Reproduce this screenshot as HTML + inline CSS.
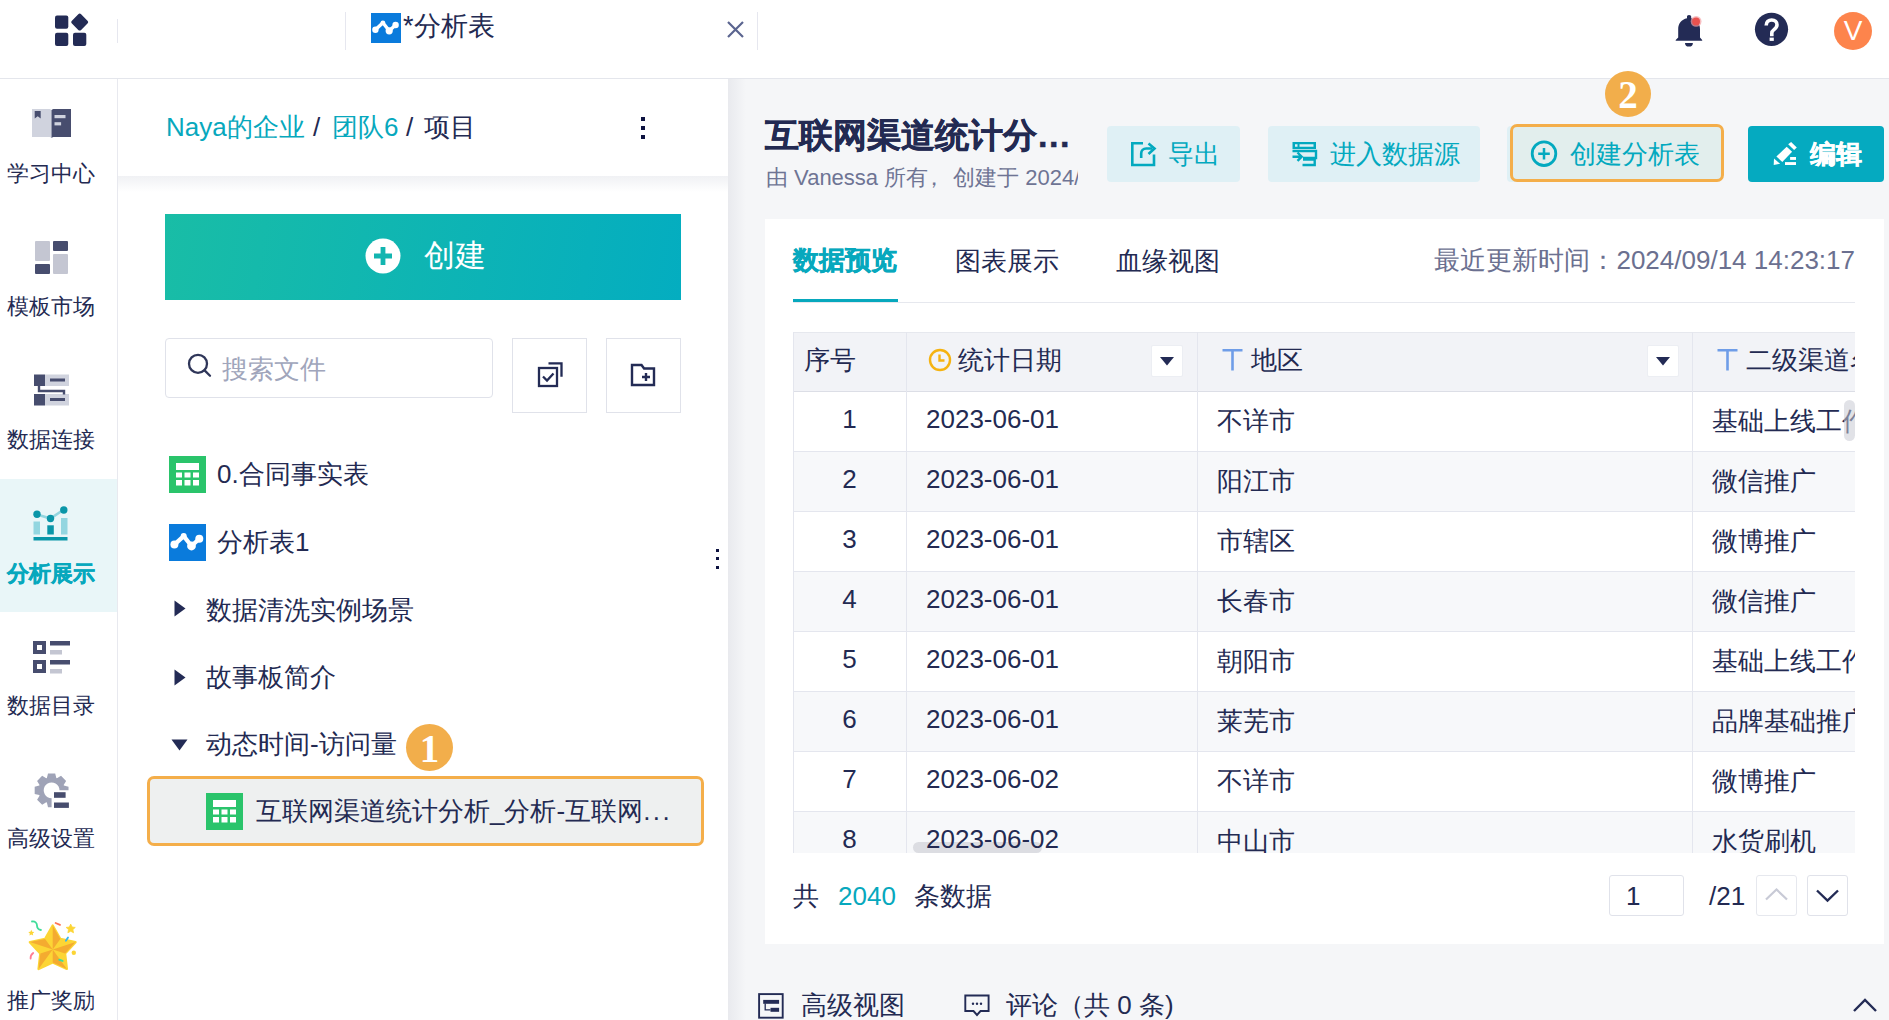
<!DOCTYPE html>
<html><head><meta charset="utf-8">
<style>
*{box-sizing:border-box;margin:0;padding:0}
html,body{width:1889px;height:1020px;overflow:hidden;background:#fff;font-family:"Liberation Sans",sans-serif;color:#232a52}
.a{position:absolute}
.t{position:absolute;white-space:nowrap;line-height:1}
.side{color:#232a52;font-size:22.4px}
.tree{font-size:26px;color:#232a52}
.row{position:absolute;left:793px;width:1062px;height:60px;border-bottom:1px solid #e4e6ee}
.cell{position:absolute;top:0;height:60px;border-right:1px solid #e4e6ee}
.num{font-size:26px;color:#232a52}
</style></head><body>
<!-- ============ top bar ============ -->
<div class="a" style="left:0;top:0;width:1889px;height:79px;background:#fff;border-bottom:1px solid #e4e6ec"></div>
<svg class="a" style="left:54px;top:13px" width="36" height="34" viewBox="0 0 36 34">
<rect x="1" y="2.4" width="13.3" height="13.3" rx="2" fill="#232b55"/>
<rect x="1" y="19.7" width="13.3" height="13.3" rx="2" fill="#232b55"/>
<rect x="19" y="19.7" width="13.3" height="13.3" rx="2" fill="#232b55"/>
<rect x="19.2" y="2.6" width="13" height="13" rx="2" fill="#232b55" transform="rotate(45 25.7 9.1)"/>
</svg>
<div class="a" style="left:117px;top:19px;width:1px;height:24px;background:#e6e7ef"></div>
<div class="a" style="left:345px;top:12px;width:1px;height:38px;background:#e6e7ef"></div>
<div class="a" style="left:757px;top:12px;width:1px;height:38px;background:#e6e7ef"></div>
<svg class="a" style="left:371px;top:13px" width="30" height="30" viewBox="0 0 30 30">
<rect width="30" height="30" fill="#0a7bdc"/>
<polyline points="4.4,16.7 11.9,9.8 18.2,17.8 24.6,12" fill="none" stroke="#fff" stroke-width="3.4" stroke-linecap="round" stroke-linejoin="round"/><circle cx="4.4" cy="16.7" r="3.2" fill="#fff"/><circle cx="18.2" cy="17.8" r="3.6" fill="#fff"/><circle cx="24.6" cy="12" r="3.2" fill="#fff"/><circle cx="11.9" cy="9.8" r="2.4" fill="#fff"/>
</svg>
<div class="t" style="left:403px;top:13px;font-size:27px">*分析表</div>
<svg class="a" style="left:726px;top:20px" width="19" height="19" viewBox="0 0 19 19"><path d="M2 2L17 17M17 2L2 17" stroke="#5b6590" stroke-width="2.2"/></svg>
<svg class="a" style="left:1673px;top:13px" width="34" height="36" viewBox="0 0 34 36">
<path d="M16 2c-1.3 0-2 .8-2 1.8v1.4C8.5 6.5 5.2 10.5 5.2 16v8.5L2.7 27v.7h26.5V27L27 24.5V16c0-5.5-3.3-9.5-8.8-10.8V3.8c0-1-.7-1.8-2.2-1.8z" fill="#232b55"/>
<path d="M12 29.9h7.9a3.95 3.6 0 0 1-7.9 0z" fill="#232b55"/>
<circle cx="23.1" cy="8.4" r="5.4" fill="#f3a3a6" opacity=".7"/>
<circle cx="23.1" cy="8.4" r="3.9" fill="#e9524f"/>
</svg>
<svg class="a" style="left:1754px;top:12px" width="35" height="35" viewBox="0 0 35 35">
<circle cx="17.5" cy="17.3" r="16.6" fill="#232b55"/>
<path d="M12.2 13.5c0-3.6 2.4-5.5 5.5-5.5 3.3 0 5.3 2 5.3 4.8 0 2.6-1.5 3.7-3 4.8-1.4 1-2.2 1.8-2.2 3.6v3" fill="none" stroke="#fff" stroke-width="3.6"/>
<rect x="15.6" y="25.6" width="4.2" height="3.3" fill="#fff"/>
</svg>
<div class="a" style="left:1834px;top:12px;width:38px;height:38px;border-radius:50%;background:#fd844c"></div>
<div class="t" style="left:1834px;top:17px;width:38px;text-align:center;font-size:28px;color:#fff">V</div>

<!-- ============ sidebar ============ -->
<div class="a" style="left:117px;top:79px;width:1px;height:941px;background:#e8e9ef"></div>
<div class="a" style="left:0;top:479px;width:117px;height:133px;background:#e9f6f8"></div>
<!-- 学习中心 -->
<svg class="a" style="left:32px;top:109px" width="39" height="29" viewBox="0 0 39 29">
<path d="M0 0h16.5c1.5 0 2.5 .5 3 1v28c-.5-.5-1.5-1-3-1H0z" fill="#d0d3de"/>
<path d="M39 0H22.5c-1.5 0-2.5.5-3 1v28c.5-.5 1.5-1 3-1H39z" fill="#474d6e"/>
<path d="M2.7 2h6v7.5l-3-2.2-3 2.2z" fill="#474d6e"/>
<rect x="22.5" y="6" width="11" height="3.2" fill="#d0d3de"/>
<rect x="22.5" y="13.2" width="6.6" height="3.2" fill="#d0d3de"/>
</svg>
<div class="t side" style="left:7px;top:163px">学习中心</div>
<!-- 模板市场 -->
<svg class="a" style="left:35px;top:241px" width="34" height="34" viewBox="0 0 34 34">
<rect x="0" y="0" width="15" height="20" rx="1" fill="#c4c6d2"/>
<rect x="18" y="0" width="15" height="10" rx="1" fill="#474d6e"/>
<rect x="0" y="23" width="15" height="10" rx="1" fill="#474d6e"/>
<rect x="18" y="13" width="15" height="20" rx="1" fill="#c4c6d2"/>
</svg>
<div class="t side" style="left:7px;top:296px">模板市场</div>
<!-- 数据连接 -->
<svg class="a" style="left:34px;top:374px" width="35" height="33" viewBox="0 0 35 33">
<rect x="11" y="0.5" width="24" height="11.5" fill="#d0d3de"/>
<rect x="11" y="20" width="24" height="11.5" fill="#d0d3de"/>
<rect x="0" y="0.5" width="11" height="11.5" fill="#474d6e"/>
<rect x="0" y="20" width="11" height="11.5" fill="#474d6e"/>
<rect x="16" y="4.5" width="15" height="3" fill="#474d6e"/>
<rect x="16" y="24" width="15" height="3" fill="#474d6e"/>
<path d="M5 12v5h25v3.5" fill="none" stroke="#474d6e" stroke-width="2.4"/>
</svg>
<div class="t side" style="left:7px;top:429px">数据连接</div>
<!-- 分析展示 active -->
<svg class="a" style="left:33px;top:506px" width="36" height="35" viewBox="0 0 36 35">
<rect x="0.5" y="15.5" width="6.5" height="13" fill="#93d6e0"/>
<rect x="14.3" y="19.3" width="6.5" height="9.2" fill="#0a96a8"/>
<rect x="28" y="12" width="6.5" height="16.5" fill="#93d6e0"/>
<polyline points="4,8.5 17.5,12.5 30.8,3.5" fill="none" stroke="#93d6e0" stroke-width="2.6"/>
<circle cx="4" cy="8.3" r="3.7" fill="#0a96a8"/>
<circle cx="17.5" cy="12.5" r="3.7" fill="#0a96a8"/>
<circle cx="30.8" cy="4" r="3.7" fill="#0a96a8"/>
<rect x="0.5" y="31" width="34" height="3.5" fill="#0a96a8"/>
</svg>
<div class="t side" style="left:7px;top:563px;color:#07a8bd;font-weight:bold;-webkit-text-stroke:0.4px #07a8bd">分析展示</div>
<!-- 数据目录 -->
<svg class="a" style="left:33px;top:641px" width="38" height="33" viewBox="0 0 38 33">
<path d="M0 0h13v13H0zM4 4v5h5V4z" fill="#474d6e" fill-rule="evenodd"/>
<path d="M0 19h13v13H0zM4 23v5h5v-5z" fill="#474d6e" fill-rule="evenodd"/>
<rect x="17" y="0" width="20" height="4.5" fill="#474d6e"/>
<rect x="17" y="9" width="12" height="4.5" fill="#c4c6d2"/>
<rect x="17" y="19" width="20" height="4.5" fill="#474d6e"/>
<rect x="17" y="28" width="12" height="4.5" fill="#c4c6d2"/>
</svg>
<div class="t side" style="left:7px;top:695px">数据目录</div>
<!-- 高级设置 -->
<svg class="a" style="left:34px;top:773px" width="36" height="36" viewBox="0 0 36 36">
<defs><clipPath id="gc"><path d="M0 0H36V17.3H17.6V36H0z"/></clipPath></defs>
<path clip-path="url(#gc)" fill-rule="evenodd" fill="#9fa3b7" d="M12.87 4.98 L14.00 0.38 L21.20 0.38 L22.33 4.98 L22.97 5.24 L27.02 2.79 L32.11 7.88 L29.66 11.93 L29.92 12.57 L34.52 13.70 L34.52 20.90 L29.92 22.03 L29.66 22.67 L32.11 26.72 L27.02 31.81 L22.97 29.36 L22.33 29.62 L21.20 34.22 L14.00 34.22 L12.87 29.62 L12.23 29.36 L8.18 31.81 L3.09 26.72 L5.54 22.67 L5.28 22.03 L0.68 20.90 L0.68 13.70 L5.28 12.57 L5.54 11.93 L3.09 7.88 L8.18 2.79 L12.23 5.24Z M17.6 9.4a7.9 7.9 0 1 0 0.01 0z"/>
<rect x="20" y="19.2" width="11.6" height="5.6" fill="#474d6e"/>
<rect x="20" y="29.5" width="14.9" height="5.4" fill="#474d6e"/>
</svg>
<div class="t side" style="left:7px;top:828px">高级设置</div>
<!-- 推广奖励 -->
<svg class="a" style="left:28px;top:918px" width="52" height="56" viewBox="0 0 52 56">
<path d="M24.70 7.50 L32.34 20.98 L47.53 24.08 L37.06 35.52 L38.81 50.92 L24.70 44.50 L10.59 50.92 L12.34 35.52 L1.87 24.08 L17.06 20.98Z" fill="#fcd535" stroke="#fcd535" stroke-width="2.4" stroke-linejoin="round"/>
<path d="M24.7 31.5 L24.70 7.50 L32.34 20.98ZM24.7 31.5 L47.53 24.08 L37.06 35.52ZM24.7 31.5 L38.81 50.92 L24.70 44.50ZM24.7 31.5 L10.59 50.92 L12.34 35.52ZM24.7 31.5 L1.87 24.08 L17.06 20.98Z" fill="#f4ab30"/>
<path d="M4 3.5c3-.5 5 1.5 5 4s1.5 4 3.9 4.5" fill="none" stroke="#3fdc9a" stroke-width="1.8" stroke-linecap="round"/>
<path d="M27.6 5l4.4 1.9" stroke="#ff7352" stroke-width="1.8" stroke-linecap="round"/>
<path d="M40 19.4l-2.1 3.3" stroke="#36b4f0" stroke-width="1.8" stroke-linecap="round"/>
<path d="M5.2 35c-2 1.5-2.8 3.5-2.6 5.7" fill="none" stroke="#ff7e93" stroke-width="1.8" stroke-linecap="round"/>
<path d="M31.3 41.8l3.3 1.1" stroke="#3fdc9a" stroke-width="2" stroke-linecap="round"/>
<path d="M42.70 6.10 L44.05 9.04 L47.27 9.42 L44.89 11.61 L45.52 14.78 L42.70 13.20 L39.88 14.78 L40.51 11.61 L38.13 9.42 L41.35 9.04Z" fill="#fcd535" stroke="#fcd535" stroke-width="0.8" stroke-linejoin="round"/>
<path d="M3.30 11.80 L4.18 13.79 L6.34 14.01 L4.73 15.46 L5.18 17.59 L3.30 16.50 L1.42 17.59 L1.87 15.46 L0.26 14.01 L2.42 13.79Z" fill="#fcd535"/>
<circle cx="45.8" cy="34.8" r="2.2" fill="#fcd535"/>
</svg>
<div class="t side" style="left:7px;top:990px">推广奖励</div>

<!-- ============ middle panel ============ -->
<div class="a" style="left:728px;top:79px;width:1161px;height:941px;background:#f5f6f8"></div>
<div class="a" style="left:728px;top:79px;width:18px;height:941px;background:linear-gradient(to right,#e9eaee,#f5f6f8)"></div>
<div class="a" style="left:118px;top:176px;width:610px;height:16px;background:linear-gradient(to bottom,#f0f1f4,#fff)"></div>
<div class="t" style="left:166px;top:114px;font-size:26px;color:#07a8bd">Naya的企业</div>
<div class="t" style="left:313px;top:114px;font-size:26px;color:#232a52">/</div>
<div class="t" style="left:332px;top:114px;font-size:26px;color:#07a8bd">团队6</div>
<div class="t" style="left:406px;top:114px;font-size:26px;color:#232a52">/</div>
<div class="t" style="left:424px;top:114px;font-size:26px;color:#232a52">项目</div>
<div class="a" style="left:641px;top:117px;width:4px;height:4px;background:#0d1240"></div>
<div class="a" style="left:641px;top:126px;width:4px;height:4px;background:#0d1240"></div>
<div class="a" style="left:641px;top:135px;width:4px;height:4px;background:#0d1240"></div>

<div class="a" style="left:165px;top:214px;width:516px;height:86px;background:linear-gradient(100deg,#19bda6 0%,#04adc0 100%)"></div>
<svg class="a" style="left:365px;top:238px" width="36" height="36" viewBox="0 0 36 36"><circle cx="18" cy="18" r="17.5" fill="#fff"/><path d="M18 9v18M9 18h18" stroke="#12b5b0" stroke-width="4.8"/></svg>
<div class="t" style="left:424px;top:240px;font-size:31px;color:#fff">创建</div>

<div class="a" style="left:165px;top:338px;width:328px;height:60px;border:1px solid #e0e2ea;border-radius:4px"></div>
<svg class="a" style="left:186px;top:352px" width="28" height="28" viewBox="0 0 28 28"><circle cx="12" cy="11.8" r="9" fill="none" stroke="#2f3659" stroke-width="2.3"/><path d="M18.6 18.4l5.4 5.4" stroke="#2f3659" stroke-width="2.3" stroke-linecap="round"/></svg>
<div class="t" style="left:222px;top:356px;font-size:26px;color:#a0a5bb">搜索文件</div>

<div class="a" style="left:512px;top:338px;width:75px;height:75px;border:1px solid #e0e2ea"></div>
<svg class="a" style="left:536px;top:360px" width="30" height="30" viewBox="0 0 30 30">
<rect x="3" y="8" width="18" height="18" fill="none" stroke="#232b55" stroke-width="2.3"/>
<path d="M12.5 3.3h13v13.5" fill="none" stroke="#232b55" stroke-width="2.3"/>
<path d="M7 16.5l4 4 6.5-7" fill="none" stroke="#232b55" stroke-width="2.3"/>
</svg>
<div class="a" style="left:606px;top:338px;width:75px;height:75px;border:1px solid #e0e2ea"></div>
<svg class="a" style="left:629px;top:362px" width="28" height="26" viewBox="0 0 28 26">
<path d="M3 3h9.5l2.6 3.5H25V23H3z" fill="none" stroke="#232b55" stroke-width="2.4"/>
<path d="M17 11v8M13 15h8" stroke="#232b55" stroke-width="2.4"/>
</svg>

<!-- tree -->
<svg class="a" style="left:169px;top:456px" width="37" height="37" viewBox="0 0 37 37">
<rect width="37" height="37" fill="#2ac46b"/>
<path d="M7 7h23v7H7zM7 16.5h6v5H7zM15.5 16.5h6v5h-6zM24 16.5h6v5h-6zM7 24h6v5.5H7zM15.5 24h6v5.5h-6zM24 24h6v5.5h-6z" fill="#fff"/>
</svg>
<div class="t tree" style="left:217px;top:461px">0.合同事实表</div>
<svg class="a" style="left:169px;top:524px" width="37" height="37" viewBox="0 0 37 37">
<rect width="37" height="37" fill="#0a7bdc"/>
<polyline points="5.4,20.6 14.7,12.1 22.5,22 30.3,14.8" fill="none" stroke="#fff" stroke-width="4.2" stroke-linecap="round" stroke-linejoin="round"/><circle cx="5.4" cy="20.6" r="4" fill="#fff"/><circle cx="22.5" cy="22" r="4.4" fill="#fff"/><circle cx="30.3" cy="14.8" r="4" fill="#fff"/><circle cx="14.7" cy="12.1" r="3" fill="#fff"/>
</svg>
<div class="t tree" style="left:217px;top:529px">分析表1</div>
<svg class="a" style="left:174px;top:600px" width="12" height="17" viewBox="0 0 12 17"><path d="M0.5 0.5l11 8-11 8z" fill="#232b55"/></svg>
<div class="t tree" style="left:206px;top:597px">数据清洗实例场景</div>
<svg class="a" style="left:174px;top:669px" width="12" height="17" viewBox="0 0 12 17"><path d="M0.5 0.5l11 8-11 8z" fill="#232b55"/></svg>
<div class="t tree" style="left:206px;top:664px">故事板简介</div>
<svg class="a" style="left:171px;top:739px" width="17" height="12" viewBox="0 0 17 12"><path d="M0.5 0.5h16l-8 11z" fill="#232b55"/></svg>
<div class="t tree" style="left:206px;top:731px">动态时间-访问量</div>
<div class="a" style="left:406px;top:724px;width:47px;height:47px;border-radius:50%;background:#f2ae4b"></div>
<div class="t" style="left:406px;top:729px;width:47px;text-align:center;font-family:'Liberation Serif',serif;font-weight:bold;font-size:39px;color:#fff">1</div>

<div class="a" style="left:147px;top:776px;width:557px;height:70px;border:3px solid #f4ae4a;border-radius:7px;background:#eef0f0"></div>
<svg class="a" style="left:206px;top:793px" width="37" height="37" viewBox="0 0 37 37">
<rect width="37" height="37" fill="#2ac46b"/>
<path d="M7 7h23v7H7zM7 16.5h6v5H7zM15.5 16.5h6v5h-6zM24 16.5h6v5h-6zM7 24h6v5.5H7zM15.5 24h6v5.5h-6zM24 24h6v5.5h-6z" fill="#fff"/>
</svg>
<div class="t tree" style="left:256px;top:798px">互联网渠道统计分析_分析-互联网<span style="letter-spacing:2.5px">...</span></div>
<div class="a" style="left:716px;top:549px;width:3px;height:3px;background:#0d1240"></div>
<div class="a" style="left:716px;top:557px;width:3px;height:3px;background:#0d1240"></div>
<div class="a" style="left:716px;top:566px;width:3px;height:3px;background:#0d1240"></div>

<!-- ============ right content ============ -->
<div class="t" style="left:765px;top:118px;font-size:34px;font-weight:bold;color:#232a52;-webkit-text-stroke:0.5px #232a52">互联网渠道统计分<span style="letter-spacing:1.6px;margin-left:1px">...</span></div>
<div class="a" style="left:766px;top:166px;width:312px;height:28px;overflow:hidden"><div class="t" style="left:0;top:1px;font-size:22px;color:#6e7494">由 Vanessa 所有<span style="margin:0 8px 0 -5px">，</span>创建于 2024/09/14</div></div>

<div class="a" style="left:1107px;top:126px;width:133px;height:56px;border-radius:4px;background:#dff0f5"></div>
<svg class="a" style="left:1130px;top:141px" width="27" height="26" viewBox="0 0 27 26">
<path d="M13 2.3H2.3v21.7h21.7V13.5" fill="none" stroke="#03a9bf" stroke-width="2.6"/>
<path d="M11.2 17v-4.5c0-3 2-5 5-5h6" fill="none" stroke="#03a9bf" stroke-width="2.6"/>
<path d="M18.5 2.5l6 5-6 5.5" fill="none" stroke="#03a9bf" stroke-width="2.6"/>
</svg>
<div class="t" style="left:1168px;top:141px;font-size:26px;color:#03a9bf">导出</div>

<div class="a" style="left:1268px;top:126px;width:212px;height:56px;border-radius:4px;background:#dff0f5"></div>
<svg class="a" style="left:1291px;top:141px" width="27" height="26" viewBox="0 0 27 26">
<path d="M1.5 1h23.5v7H1.5zM4 3.2v2.5h2.5V3.2zM8.5 3.2v2.5h14V3.2z" fill="#03a9bf" fill-rule="evenodd"/>
<path d="M1.5 10h23.5v7H12" fill="none" stroke="#03a9bf" stroke-width="2.4"/>
<path d="M12 18.5h11.7v5.5H11.5" fill="none" stroke="#03a9bf" stroke-width="2.4"/>
<path d="M1.5 15.7h9M6.5 11.5l4.2 4.2-4.2 4.2" fill="none" stroke="#03a9bf" stroke-width="2.4"/>
</svg>
<div class="t" style="left:1330px;top:141px;font-size:26px;color:#03a9bf">进入数据源</div>

<div class="a" style="left:1507px;top:126px;width:212px;height:56px;border-radius:4px;background:#dff0f5"></div>
<div class="a" style="left:1510px;top:124px;width:214px;height:58px;border:3px solid #f4ae4a;border-radius:7px;background:#e2eeed"></div>
<svg class="a" style="left:1530px;top:140px" width="28" height="28" viewBox="0 0 28 28"><circle cx="14" cy="13.7" r="11.8" fill="none" stroke="#03a9bf" stroke-width="2.8"/><path d="M14 8v11.6M8.2 13.8h11.6" stroke="#03a9bf" stroke-width="2.5"/></svg>
<div class="t" style="left:1570px;top:141px;font-size:26px;color:#03a9bf">创建分析表</div>
<div class="a" style="left:1605px;top:71px;width:46px;height:46px;border-radius:50%;background:#f2ae4b"></div>
<div class="t" style="left:1605px;top:75px;width:46px;text-align:center;font-family:'Liberation Serif',serif;font-weight:bold;font-size:39px;color:#fff">2</div>

<div class="a" style="left:1748px;top:126px;width:136px;height:56px;border-radius:4px;background:#05aac0"></div>
<svg class="a" style="left:1772px;top:141px" width="26" height="26" viewBox="0 0 26 26">
<path d="M16.2 3.2L19.1 1 24.8 6.4 22.1 8.9z" fill="#fff"/>
<path d="M4.4 15.5L14.7 5.7 20.1 10.8 10.3 20.9z" fill="#fff"/>
<path d="M2 17.4L8.1 22.8 1.7 24z" fill="#fff"/>
<rect x="18.1" y="16" width="5.9" height="2.9" fill="#fff"/>
<rect x="13" y="21.1" width="11" height="2.9" fill="#fff"/>
</svg>
<div class="t" style="left:1810px;top:141px;font-size:26px;color:#fff;font-weight:bold;-webkit-text-stroke:0.4px #fff">编辑</div>

<!-- card -->
<div class="a" style="left:765px;top:219px;width:1119px;height:725px;background:#fff"></div>
<div class="t" style="left:793px;top:247px;font-size:26px;color:#07a8bd;font-weight:bold;-webkit-text-stroke:0.4px #07a8bd">数据预览</div>
<div class="t" style="left:955px;top:248px;font-size:26px;color:#232a52">图表展示</div>
<div class="t" style="left:1116px;top:248px;font-size:26px;color:#232a52">血缘视图</div>
<div class="a" style="left:793px;top:302px;width:1062px;height:1px;background:#e6e8ee"></div>
<div class="a" style="left:793px;top:299px;width:105px;height:3px;background:#07a8bd"></div>
<div class="t" style="left:1255px;width:600px;text-align:right;top:247px;font-size:26px;color:#6b7090">最近更新时间：2024/09/14 14:23:17</div>

<!-- table -->
<div id="tbl" class="a" style="left:793px;top:332px;width:1062px;height:521px;overflow:hidden">
<div class="a" style="left:0;top:0;width:1062px;height:60px;background:#f2f3f7;border-top:1px solid #e6e8ee;border-bottom:1px solid #dcdee6"></div>
<div class="a" style="left:113px;top:0;width:1px;height:521px;background:#e4e6ee"></div>
<div class="a" style="left:404px;top:0;width:1px;height:521px;background:#e4e6ee"></div>
<div class="a" style="left:899px;top:0;width:1px;height:521px;background:#e4e6ee"></div>
<div class="t" style="left:11px;top:15px;font-size:26px">序号</div>
<svg class="a" style="left:135px;top:16px" width="24" height="24" viewBox="0 0 24 24"><circle cx="12" cy="12" r="10" fill="none" stroke="#f5b312" stroke-width="2.4"/><path d="M11.5 6.5v6h5" fill="none" stroke="#f5b312" stroke-width="2.4"/></svg>
<div class="t" style="left:165px;top:15px;font-size:26px">统计日期</div>
<div class="a" style="left:358px;top:13px;width:32px;height:32px;background:#fff;border:1px solid #eceef3;border-radius:2px"></div>
<svg class="a" style="left:366px;top:24px" width="16" height="10" viewBox="0 0 16 10"><path d="M1 1h14l-7 8.5z" fill="#232b55"/></svg>
<svg class="a" style="left:429px;top:17px" width="21" height="22" viewBox="0 0 21 22"><path d="M0.5 1.3H20.5M10.5 1.3V21.5" stroke="#6f9de8" stroke-width="2.6"/></svg>
<div class="t" style="left:458px;top:15px;font-size:26px">地区</div>
<div class="a" style="left:854px;top:13px;width:32px;height:32px;background:#fff;border:1px solid #eceef3;border-radius:2px"></div>
<svg class="a" style="left:862px;top:24px" width="16" height="10" viewBox="0 0 16 10"><path d="M1 1h14l-7 8.5z" fill="#232b55"/></svg>
<svg class="a" style="left:924px;top:17px" width="21" height="22" viewBox="0 0 21 22"><path d="M0.5 1.3H20.5M10.5 1.3V21.5" stroke="#6f9de8" stroke-width="2.6"/></svg>
<div class="t" style="left:953px;top:15px;font-size:26px">二级渠道名称</div>
<div class="a" style="left:0;top:60px;width:1062px;height:60px;background:#fff;border-bottom:1px solid #e4e6ee"></div>
<div class="t num" style="left:0;top:74px;width:113px;text-align:center">1</div>
<div class="t num" style="left:133px;top:74px">2023-06-01</div>
<div class="t num" style="left:424px;top:76px">不详市</div>
<div class="t num" style="left:919px;top:76px">基础上线工作</div>
<div class="a" style="left:0;top:120px;width:1062px;height:60px;background:#f7f8fa;border-bottom:1px solid #e4e6ee"></div>
<div class="t num" style="left:0;top:134px;width:113px;text-align:center">2</div>
<div class="t num" style="left:133px;top:134px">2023-06-01</div>
<div class="t num" style="left:424px;top:136px">阳江市</div>
<div class="t num" style="left:919px;top:136px">微信推广</div>
<div class="a" style="left:0;top:180px;width:1062px;height:60px;background:#fff;border-bottom:1px solid #e4e6ee"></div>
<div class="t num" style="left:0;top:194px;width:113px;text-align:center">3</div>
<div class="t num" style="left:133px;top:194px">2023-06-01</div>
<div class="t num" style="left:424px;top:196px">市辖区</div>
<div class="t num" style="left:919px;top:196px">微博推广</div>
<div class="a" style="left:0;top:240px;width:1062px;height:60px;background:#f7f8fa;border-bottom:1px solid #e4e6ee"></div>
<div class="t num" style="left:0;top:254px;width:113px;text-align:center">4</div>
<div class="t num" style="left:133px;top:254px">2023-06-01</div>
<div class="t num" style="left:424px;top:256px">长春市</div>
<div class="t num" style="left:919px;top:256px">微信推广</div>
<div class="a" style="left:0;top:300px;width:1062px;height:60px;background:#fff;border-bottom:1px solid #e4e6ee"></div>
<div class="t num" style="left:0;top:314px;width:113px;text-align:center">5</div>
<div class="t num" style="left:133px;top:314px">2023-06-01</div>
<div class="t num" style="left:424px;top:316px">朝阳市</div>
<div class="t num" style="left:919px;top:316px">基础上线工作</div>
<div class="a" style="left:0;top:360px;width:1062px;height:60px;background:#f7f8fa;border-bottom:1px solid #e4e6ee"></div>
<div class="t num" style="left:0;top:374px;width:113px;text-align:center">6</div>
<div class="t num" style="left:133px;top:374px">2023-06-01</div>
<div class="t num" style="left:424px;top:376px">莱芜市</div>
<div class="t num" style="left:919px;top:376px">品牌基础推广</div>
<div class="a" style="left:0;top:420px;width:1062px;height:60px;background:#fff;border-bottom:1px solid #e4e6ee"></div>
<div class="t num" style="left:0;top:434px;width:113px;text-align:center">7</div>
<div class="t num" style="left:133px;top:434px">2023-06-02</div>
<div class="t num" style="left:424px;top:436px">不详市</div>
<div class="t num" style="left:919px;top:436px">微博推广</div>
<div class="a" style="left:0;top:480px;width:1062px;height:60px;background:#f7f8fa;border-bottom:1px solid #e4e6ee"></div>
<div class="a" style="left:120px;top:510px;width:129px;height:11px;border-radius:6px;background:#dcdde2"></div>
<div class="t num" style="left:0;top:494px;width:113px;text-align:center">8</div>
<div class="t num" style="left:133px;top:494px">2023-06-02</div>
<div class="t num" style="left:424px;top:496px">中山市</div>
<div class="t num" style="left:919px;top:496px">水货刷机</div>
<div class="a" style="left:113px;top:0;width:1px;height:521px;background:#e4e6ee"></div>
<div class="a" style="left:404px;top:0;width:1px;height:521px;background:#e4e6ee"></div>
<div class="a" style="left:899px;top:0;width:1px;height:521px;background:#e4e6ee"></div>
<div class="a" style="left:0;top:0;width:1px;height:521px;background:#e4e6ee"></div>
<div class="a" style="left:1051px;top:68px;width:11px;height:41px;border-radius:6px;background:rgba(200,202,212,.55)"></div>
</div>

<!-- footer -->
<div class="t" style="left:793px;top:883px;font-size:26px;color:#232a52">共</div>
<div class="t" style="left:838px;top:883px;font-size:26px;color:#07a8bd">2040</div>
<div class="t" style="left:914px;top:883px;font-size:26px;color:#232a52">条数据</div>
<div class="a" style="left:1609px;top:875px;width:75px;height:41px;border:1px solid #e0e2ea;border-radius:3px"></div>
<div class="t" style="left:1626px;top:883px;font-size:26px">1</div>
<div class="t" style="left:1709px;top:883px;font-size:26px">/21</div>
<div class="a" style="left:1756px;top:875px;width:41px;height:41px;border:1px solid #e6e8ee;border-radius:3px"></div>
<svg class="a" style="left:1764px;top:884px" width="25" height="22" viewBox="0 0 25 22"><path d="M2 15.5l10.5-10 10.5 10" fill="none" stroke="#c8cad6" stroke-width="2.2"/></svg>
<div class="a" style="left:1807px;top:875px;width:41px;height:41px;border:1px solid #e0e2ea;border-radius:3px"></div>
<svg class="a" style="left:1815px;top:884px" width="25" height="22" viewBox="0 0 25 22"><path d="M2 6.5l10.5 10 10.5-10" fill="none" stroke="#232b55" stroke-width="2.4"/></svg>

<!-- bottom -->
<svg class="a" style="left:757px;top:992px" width="28" height="28" viewBox="0 0 28 28">
<rect x="2.1" y="2.1" width="23.6" height="23.6" fill="none" stroke="#232b55" stroke-width="1.9"/>
<rect x="6.2" y="7.9" width="15.9" height="3.9" fill="#232b55"/>
<rect x="13.5" y="15.8" width="8.6" height="4" fill="#232b55"/>
<path d="M8.2 11.5V17.8H13.5" fill="none" stroke="#232b55" stroke-width="1.3"/>
</svg>
<div class="t" style="left:801px;top:992px;font-size:26px">高级视图</div>
<svg class="a" style="left:962px;top:992px" width="30" height="26" viewBox="0 0 30 26">
<path d="M3.3 3.5H26.6V19H18.5L15 23 11.5 19H3.3Z" fill="none" stroke="#232b55" stroke-width="1.9"/>
<circle cx="11" cy="11.8" r="1.2" fill="#232b55"/><circle cx="15" cy="11.8" r="1.2" fill="#232b55"/><circle cx="19" cy="11.8" r="1.2" fill="#232b55"/>
</svg>
<div class="t" style="left:1006px;top:992px;font-size:26px">评论（共 0 条)</div>
<svg class="a" style="left:1852px;top:996px" width="26" height="18" viewBox="0 0 26 18"><path d="M2 15L13 4l11 11" fill="none" stroke="#232b55" stroke-width="2.4"/></svg>
</body></html>
